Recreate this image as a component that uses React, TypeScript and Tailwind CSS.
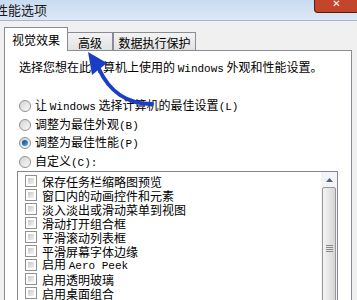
import React from "react";

const cjk = "font-['SimSun','Noto_Sans_CJK_SC',sans-serif]";

function Latin({ children }: { children: React.ReactNode }) {
  return <span className="font-['Liberation_Mono',monospace] text-[11px]">{children}</span>;
}

function Radio({ checked }: { checked?: boolean }) {
  return (
    <span className="mr-[4px] flex h-[12px] w-[12px] shrink-0 items-center justify-center rounded-full border border-[#8e8f8f] bg-linear-to-br from-[#d2d2d2] to-[#fbfbfb]">
      {checked && <span className="h-[6px] w-[6px] rounded-full bg-linear-to-br from-[#0c3f78] to-[#56b2ee]" />}
    </span>
  );
}

function Check() {
  return (
    <span className="mr-[5px] flex h-[12px] w-[12px] shrink-0 border border-[#8e8f8f] bg-white p-[2px]">
      <span className="h-full w-full bg-linear-to-br from-[#c8c8c8] to-[#f4f4f4]" />
    </span>
  );
}

const options: React.ReactNode[] = [
  "保存任务栏缩略图预览",
  "窗口内的动画控件和元素",
  "淡入淡出或滑动菜单到视图",
  "滑动打开组合框",
  "平滑滚动列表框",
  "平滑屏幕字体边缘",
  <>启用 <Latin>Aero Peek</Latin></>,
  "启用透明玻璃",
  "启用桌面组合",
  "在窗口和按钮上使用视觉样式",
];

export default function App() {
  return (
    <div className={`relative h-[300px] w-[357px] overflow-hidden bg-[#f0f0f0] text-black ${cjk}`}>
      {/* title bar */}
      <div className="flex h-[21px] items-start justify-between border-b border-[#a7b7c9] bg-linear-to-b from-[#c9dbf1] to-[#dde8f6]">
        <span className="-ml-[5px] mt-[2px] text-[13px] leading-[16px] text-[#1a1a1a]">性能选项</span>
        <div className="mr-[-2px] flex h-[13px] w-[45px] items-end justify-center rounded-b-[4px] border border-t-0 border-[#5e1a0e] bg-[#c2452c] pb-[3px]">
          <span className="font-['DejaVu_Sans',sans-serif] text-[10px] font-bold leading-[10px] text-white">✕</span>
        </div>
      </div>

      <div className="px-[4px] pt-[6px]">
        {/* tabs */}
        <div className="flex h-[23px] items-end text-[12px] leading-[14px]">
          <div className="relative z-10 -mb-px flex h-[24px] w-[64px] items-center justify-center border border-b-0 border-[#898c95] bg-white pt-[1px]">
            视觉效果
          </div>
          <div className="flex h-[18px] w-[45px] items-center justify-center border border-b-0 border-l-0 border-[#898c95] bg-linear-to-b from-[#f3f3f3] to-[#e2e2e2] pt-[2px]">
            高级
          </div>
          <div className="flex h-[18px] w-[83px] items-center justify-center border border-b-0 border-[#898c95] bg-linear-to-b from-[#f3f3f3] to-[#e2e2e2] pt-[2px]">
            数据执行保护
          </div>
        </div>

        {/* panel */}
        <div className="h-[260px] w-[348px] border border-[#898c95] bg-white pl-[14px] pt-[9px] text-[12px] leading-[14px]">
          <div className="h-[14px]">
            选择您想在此计算机上使用的 <Latin>Windows</Latin> 外观和性能设置。
          </div>

          <div className="mt-[23px]">
            <div className="flex h-[18.5px] items-center">
              <Radio />
              <span>
                让 <Latin>Windows</Latin> 选择计算机的最佳设置<Latin>(L)</Latin>
              </span>
            </div>
            <div className="flex h-[18.5px] items-center">
              <Radio />
              <span>
                调整为最佳外观<Latin>(B)</Latin>
              </span>
            </div>
            <div className="flex h-[18.5px] items-center">
              <Radio checked />
              <span>
                调整为最佳性能<Latin>(P)</Latin>
              </span>
            </div>
            <div className="flex h-[18.5px] items-center">
              <Radio />
              <span>
                自定义<Latin>(C):</Latin>
              </span>
            </div>
          </div>

          {/* list box */}
          <div className="-ml-[2px] flex h-[140px] w-[321px] border border-[#828790] bg-white">
            <div className="flex-1 overflow-hidden pl-[7px] pt-[2px]">
              {options.map((o, i) => (
                <div key={i} className="flex h-[14px] items-center whitespace-nowrap">
                  <Check />
                  <span className="leading-[13px]">{o}</span>
                </div>
              ))}
            </div>
            <div className="flex w-[16px] flex-col bg-[#f4f4f6]">
              <div className="flex h-[18px] items-center justify-center pt-[4px]">
                <svg width="7" height="4" viewBox="0 0 7 4">
                  <path d="M0 4 L3.5 0 L7 4 Z" fill="#4d6185" />
                </svg>
              </div>
              <div className="mx-[1px] mt-[3px] flex h-[206px] items-center justify-center rounded-[2px] border border-[#979797] bg-linear-to-r from-[#f4f4f4] to-[#d6d6d6]">
                <div className="flex flex-col gap-[1px]">
                  <span className="h-px w-[7px] bg-[#8a8a8a]" />
                  <span className="h-px w-[7px] bg-[#8a8a8a]" />
                  <span className="h-px w-[7px] bg-[#8a8a8a]" />
                  <span className="h-px w-[7px] bg-[#8a8a8a]" />
                </div>
              </div>
            </div>
          </div>
        </div>
      </div>

      {/* annotation arrow */}
      <svg className="pointer-events-none absolute inset-0" width="357" height="300" viewBox="0 0 357 300">
        <path d="M152 104 C 127 104, 109 91, 99 69" fill="none" stroke="#1b3fc4" strokeWidth="4" strokeLinecap="round" />
        <polygon points="88,52 107,63 92,75" fill="#1b3fc4" />
      </svg>
    </div>
  );
}
